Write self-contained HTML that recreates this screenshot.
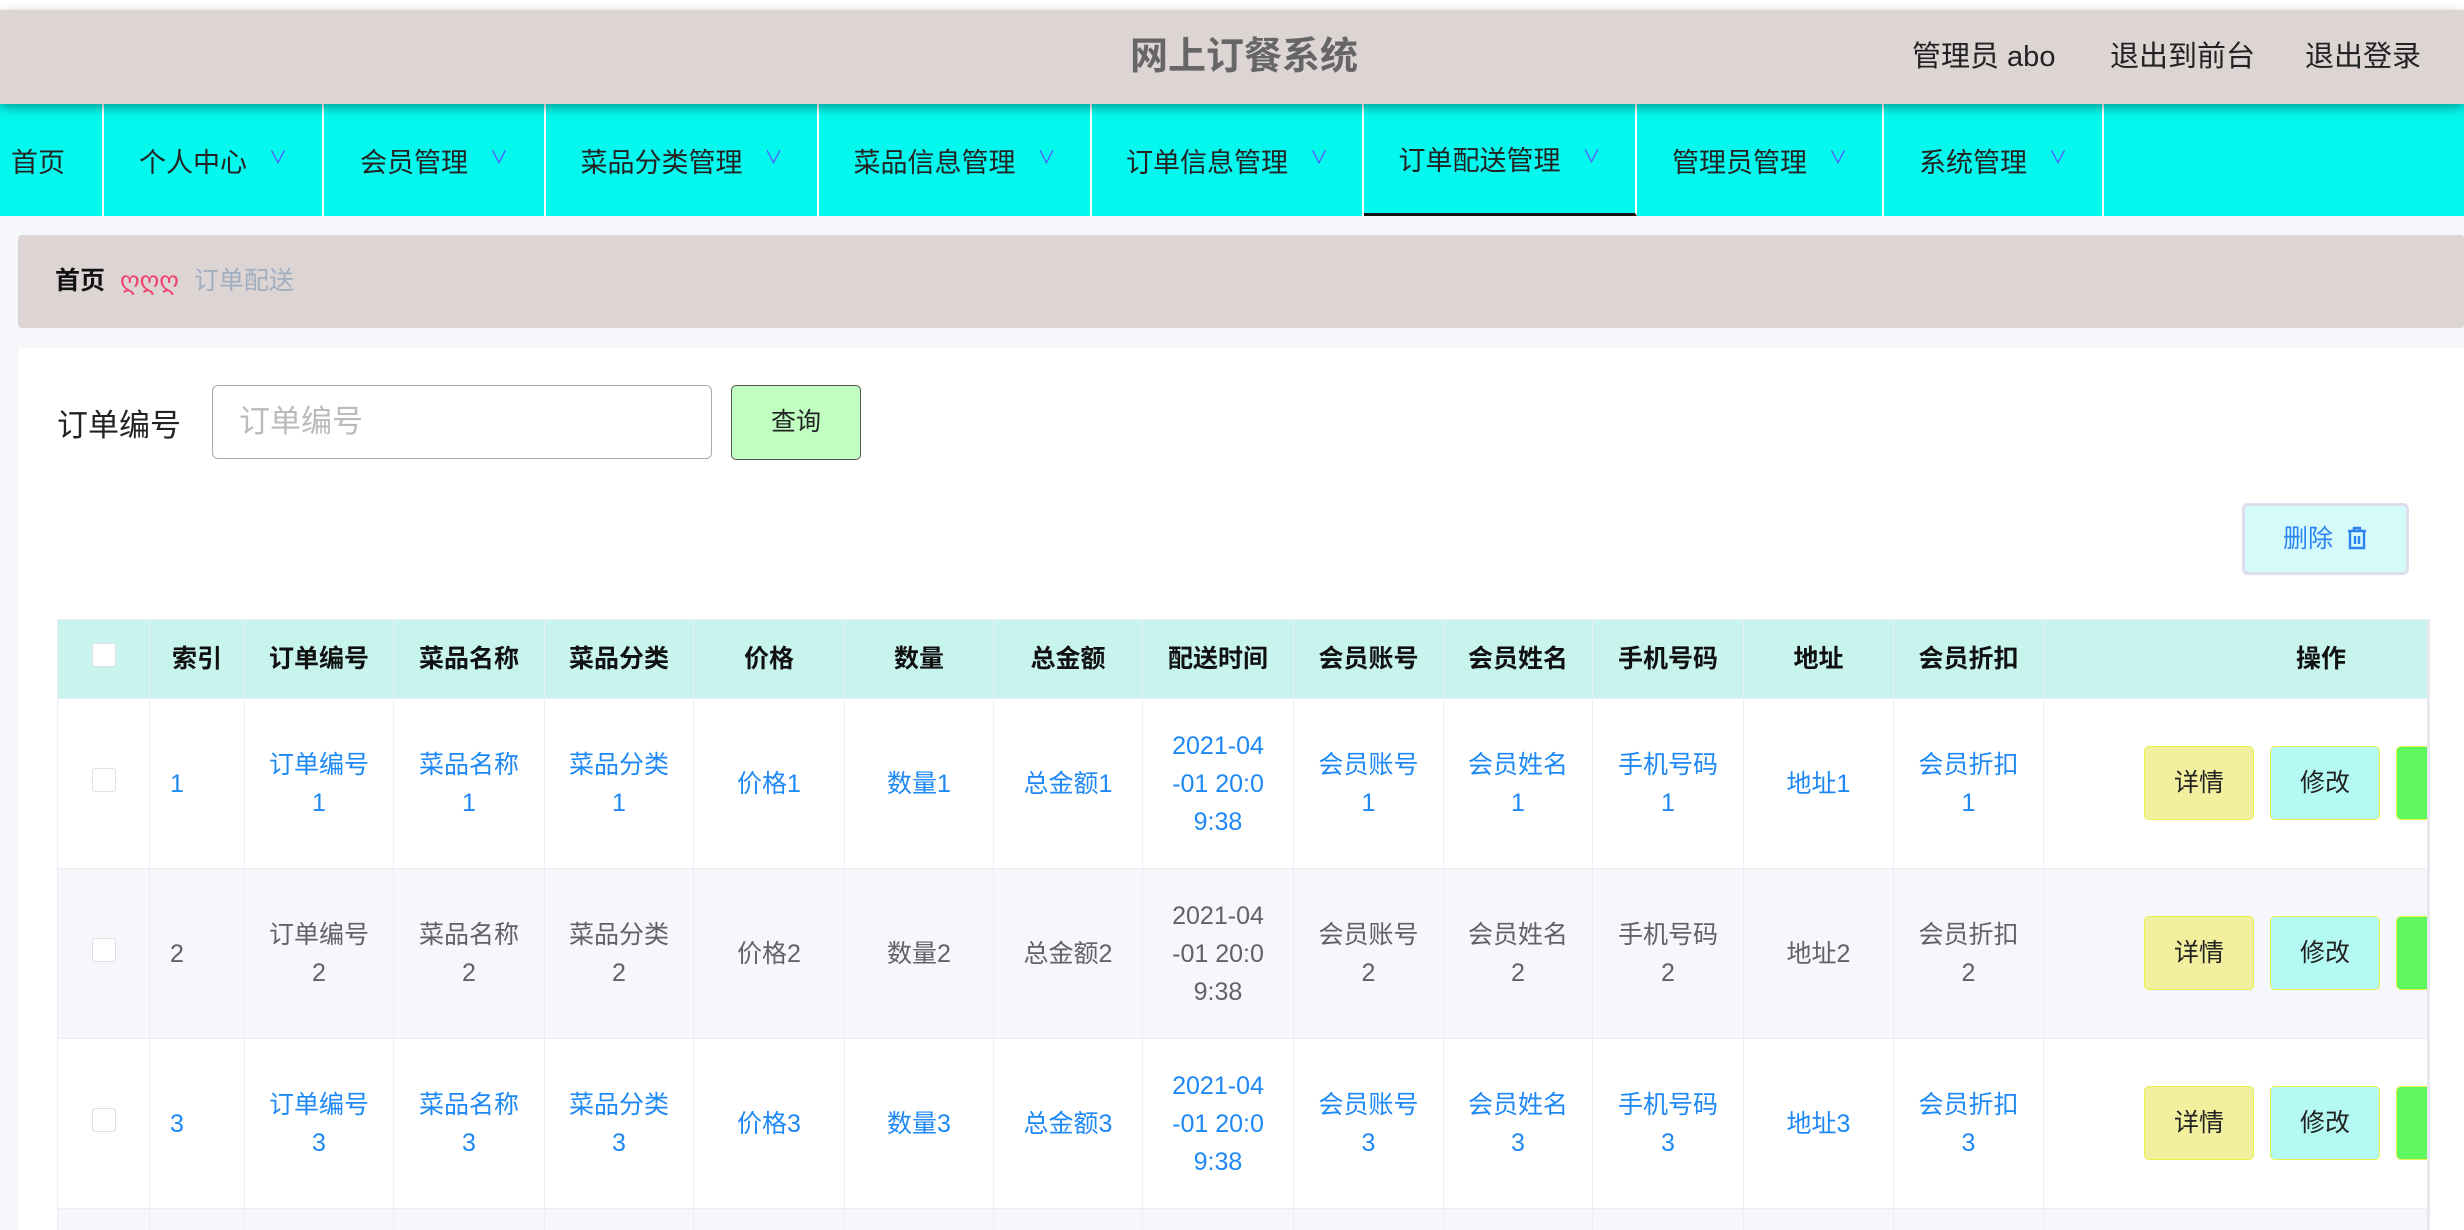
<!DOCTYPE html>
<html><head><meta charset="utf-8"><style>
*{margin:0;padding:0;box-sizing:border-box}
html,body{width:2464px;height:1230px;overflow:hidden}
body{background:#f5f7fa;font-family:"Liberation Sans","Noto Sans CJK SC",sans-serif;position:relative}
.top{position:absolute;left:0;top:0;width:2464px;height:10px;background:#fff}
.hdr{position:absolute;left:0;top:10px;width:2464px;height:94px;background:#ddd4d4;box-shadow:0 4px 10px rgba(0,0,0,.35);z-index:2}
.hdr .t{position:absolute;left:12px;width:2464px;top:0;line-height:94px;text-align:center;font-size:38px;font-weight:bold;color:#666}
.hdr .r{position:absolute;top:0;line-height:94px;font-size:29px;color:#222}
.nav{position:absolute;left:0;top:104px;width:2464px;height:112px;background:#05f8ee}
.ni{position:absolute;top:0;height:112px;display:flex;align-items:center;justify-content:center;font-size:27px;color:#222;border-right:2px solid #fff}
.ni .a{color:#55f;font-size:18px;margin-left:22px;margin-top:-6px}
.ni.act{border-bottom:3px solid #111}
.bc{position:absolute;left:18px;top:235px;width:2446px;height:93px;background:#ddd4d4;border-radius:4px;font-size:25px;line-height:93px;padding-left:37px}
.main{position:absolute;left:18px;top:348px;width:2446px;height:882px;background:#fff}
.lab{position:absolute;left:57px;top:400px;font-size:31px;color:#222}
.inp{position:absolute;left:212px;top:385px;width:500px;height:74px;border:1px solid #aaa;border-radius:6px;font-size:31px;color:#bbb;line-height:72px;padding-left:26px;background:#fff}
.q{position:absolute;left:731px;top:385px;width:130px;height:75px;background:#c0ffc0;border:1px solid #555;border-radius:5px;font-size:25px;text-align:center;line-height:73px;color:#222}
.del{position:absolute;left:2242px;top:503px;width:167px;height:72px;background:#d5fafa;border:3px solid #dde;border-radius:6px;color:#2b83f0;font-size:25px;text-align:center;line-height:66px}
.tw{position:absolute;left:57px;top:619px;width:2373px;height:611px;overflow:hidden;border-right:3px solid #e6e8ee}
table{border-collapse:collapse;table-layout:fixed;width:2500px}
td,th{border:1px solid #ebeef5;text-align:center;vertical-align:middle;font-size:25px;line-height:38px;overflow:hidden}
th{background:#c7f5ee;height:79px;font-weight:bold;color:#111}
td{height:169px;color:#1e88f5}
td.ix{text-align:left;padding-left:20px}
tr.g td{background:#f5f7fa;color:#606266}
.cb{display:inline-block;width:24px;height:24px;border:1px solid #dcdfe6;border-radius:3px;background:#fff}
.ops{position:relative;height:169px}
.b{position:absolute;top:47px;width:110px;height:74px;border:1px solid #e6f04a;border-radius:5px;line-height:72px;color:#222;font-size:25px}
</style></head><body>
<div class="top"></div>
<div class="hdr"><div class="t">网上订餐系统</div>
<div class="r" style="left:1912px">管理员 abo</div>
<div class="r" style="left:2110px">退出到前台</div>
<div class="r" style="left:2305px">退出登录</div></div>
<div class="nav">
<div class="ni" style="left:0;width:104px;justify-content:flex-start;padding-left:11px">首页</div>
<div class="ni" style="left:104px;width:220px">个人中心<span class="a">∨</span></div>
<div class="ni" style="left:324px;width:222px">会员管理<span class="a">∨</span></div>
<div class="ni" style="left:546px;width:273px">菜品分类管理<span class="a">∨</span></div>
<div class="ni" style="left:819px;width:273px">菜品信息管理<span class="a">∨</span></div>
<div class="ni" style="left:1092px;width:272px">订单信息管理<span class="a">∨</span></div>
<div class="ni act" style="left:1364px;width:273px">订单配送管理<span class="a">∨</span></div>
<div class="ni" style="left:1637px;width:247px">管理员管理<span class="a">∨</span></div>
<div class="ni" style="left:1884px;width:220px">系统管理<span class="a">∨</span></div>
</div>
<div class="bc"><b style="color:#111">首页</b> <span style="color:#f0406a;margin:0 8px">ღღღ</span> <span style="color:#a0aec0">订单配送</span></div>
<div class="main"></div>
<div class="lab">订单编号</div>
<div class="inp">订单编号</div>
<div class="q">查询</div>
<div class="del">删除 <svg width="22" height="24" viewBox="0 0 22 24" style="vertical-align:-3px;margin-left:6px" fill="none" stroke="#2b83f0" stroke-width="2.4"><path d="M2 5h18M8 5V2h6v3M4 5v17h14V5M9 10v8M13 10v8"/></svg></div>
<div class="tw"><table>
<colgroup><col style="width:92px"><col style="width:95px"><col style="width:149px"><col style="width:151px"><col style="width:149px"><col style="width:151px"><col style="width:149px"><col style="width:149px"><col style="width:151px"><col style="width:150px"><col style="width:149px"><col style="width:151px"><col style="width:150px"><col style="width:150px"><col style="width:514px"></colgroup>
<tr><th><span class="cb"></span></th><th>索引</th><th>订单编号</th><th>菜品名称</th><th>菜品分类</th><th>价格</th><th>数量</th><th>总金额</th><th>配送时间</th><th>会员账号</th><th>会员姓名</th><th>手机号码</th><th>地址</th><th>会员折扣</th><th style="text-align:left;padding-left:252px">操作</th></tr>
<tr><td><span class="cb"></span></td><td class="ix">1</td><td>订单编号<br>1</td><td>菜品名称<br>1</td><td>菜品分类<br>1</td><td>价格1</td><td>数量1</td><td>总金额1</td><td>2021-04<br>-01 20:0<br>9:38</td><td>会员账号<br>1</td><td>会员姓名<br>1</td><td>手机号码<br>1</td><td>地址1</td><td>会员折扣<br>1</td><td><div class="ops"><div class="b" style="left:100px;background:#f2f09e">详情</div><div class="b" style="left:226px;background:#b4faf2">修改</div><div class="b" style="left:352px;background:#60f860">删除</div></div></td></tr>
<tr class="g"><td><span class="cb"></span></td><td class="ix">2</td><td>订单编号<br>2</td><td>菜品名称<br>2</td><td>菜品分类<br>2</td><td>价格2</td><td>数量2</td><td>总金额2</td><td>2021-04<br>-01 20:0<br>9:38</td><td>会员账号<br>2</td><td>会员姓名<br>2</td><td>手机号码<br>2</td><td>地址2</td><td>会员折扣<br>2</td><td><div class="ops"><div class="b" style="left:100px;background:#f2f09e">详情</div><div class="b" style="left:226px;background:#b4faf2">修改</div><div class="b" style="left:352px;background:#60f860">删除</div></div></td></tr>
<tr><td><span class="cb"></span></td><td class="ix">3</td><td>订单编号<br>3</td><td>菜品名称<br>3</td><td>菜品分类<br>3</td><td>价格3</td><td>数量3</td><td>总金额3</td><td>2021-04<br>-01 20:0<br>9:38</td><td>会员账号<br>3</td><td>会员姓名<br>3</td><td>手机号码<br>3</td><td>地址3</td><td>会员折扣<br>3</td><td><div class="ops"><div class="b" style="left:100px;background:#f2f09e">详情</div><div class="b" style="left:226px;background:#b4faf2">修改</div><div class="b" style="left:352px;background:#60f860">删除</div></div></td></tr>
<tr class="g"><td></td><td></td><td></td><td></td><td></td><td></td><td></td><td></td><td></td><td></td><td></td><td></td><td></td><td></td><td></td></tr>
</table></div>
</body></html>
